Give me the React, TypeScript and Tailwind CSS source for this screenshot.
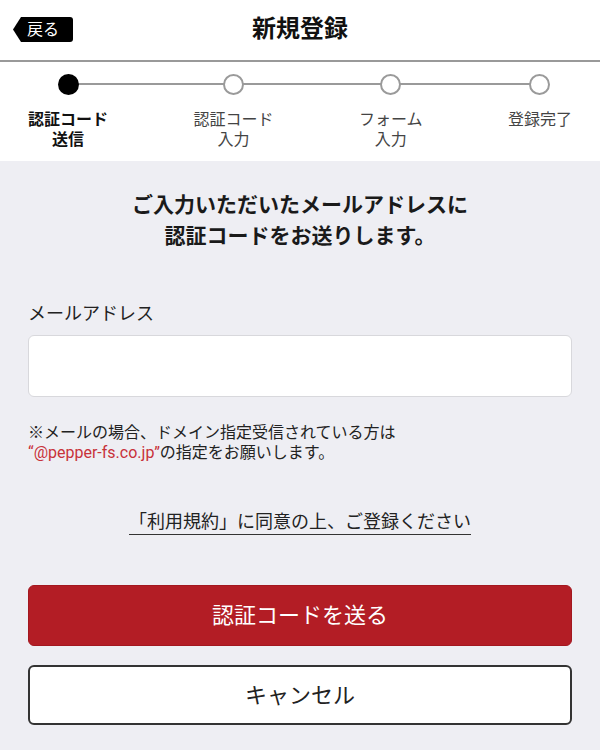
import React from 'react';

const steps = [
  { label: ['認証コード', '送信'], active: true },
  { label: ['認証コード', '入力'], active: false },
  { label: ['フォーム', '入力'], active: false },
  { label: ['登録完了'], active: false },
];

export default function App() {
  return (
    <div className="w-[600px] h-[750px] overflow-hidden bg-[#eeeef3] text-[#222] font-['Roboto','Noto_Sans_CJK_JP',sans-serif]">
      {/* Header */}
      <header className="h-[62px] grid grid-cols-[1fr_auto_1fr] items-center bg-white border-b-2 border-[#999]">
        <button className="ml-[13px] mb-[2px] flex items-center w-[60px] h-[25px]">
          <svg width="8" height="25" viewBox="0 0 8 25" className="shrink-0">
            <path d="M8 0 L0 12.5 L8 25 Z" fill="#000" />
          </svg>
          <span className="flex-1 h-full bg-black rounded-r-[3px] text-white text-[16px] leading-[25px] text-left pl-[6px]">
            戻る
          </span>
        </button>
        <h1 className="text-[24px] font-bold leading-[30px] mb-[2px] text-[#111]">新規登録</h1>
        <div />
      </header>

      {/* Stepper */}
      <div className="relative bg-white h-[99px] px-[28px] pt-[12px] flex justify-between">
        <div className="absolute left-[67px] right-[60px] top-[21px] h-[2px] bg-[#9a9a9a]" />
        {steps.map((s, i) => (
          <div key={i} className="relative flex flex-col items-center">
            {s.active ? (
              <div className="w-[21px] h-[21px] rounded-full bg-black" />
            ) : (
              <div className="w-[21px] h-[21px] rounded-full bg-white border-2 border-[#9a9a9a]" />
            )}
            <div
              className={
                'mt-[15px] text-[16px] leading-[20px] text-center whitespace-nowrap ' +
                (s.active ? 'font-bold text-[#111]' : 'text-[#444]')
              }
            >
              {s.label.map((l) => (
                <div key={l}>{l}</div>
              ))}
            </div>
          </div>
        ))}
      </div>

      {/* Body */}
      <main className="px-[28px]">
        <p className="pt-[29px] text-[21px] font-bold leading-[31px] text-center text-[#1a1a1a]">
          ご入力いただいたメールアドレスに
          <br />
          認証コードをお送りします。
        </p>

        <label className="block mt-[50px] text-[18px] leading-[24px] text-[#222]">メールアドレス</label>
        <input
          type="email"
          className="block mt-[9px] w-full h-[62px] rounded-[6px] border border-[#d8d8dc] bg-white px-3 outline-none"
        />

        <p className="mt-[26px] text-[16px] leading-[20px] text-[#222]">
          ※メールの場合、ドメイン指定受信されている方は
          <br />
          <span className="text-[#c8323a]">“@pepper-fs.co.jp”</span>の指定をお願いします。
        </p>

        <div className="mt-[47px] flex justify-center">
          <a className="inline-block border-b border-[#333] text-[18px] leading-[24px] text-[#222]">
            「利用規約」に同意の上、ご登録ください
          </a>
        </div>

        <button className="mt-[50px] w-full h-[61px] rounded-[6px] bg-[#b31d25] border border-[#a3171f] text-white text-[22px]">
          認証コードを送る
        </button>
        <button className="mt-[19px] w-full h-[60px] rounded-[6px] bg-white border-2 border-[#333] text-[#222] text-[22px]">
          キャンセル
        </button>
      </main>
    </div>
  );
}
